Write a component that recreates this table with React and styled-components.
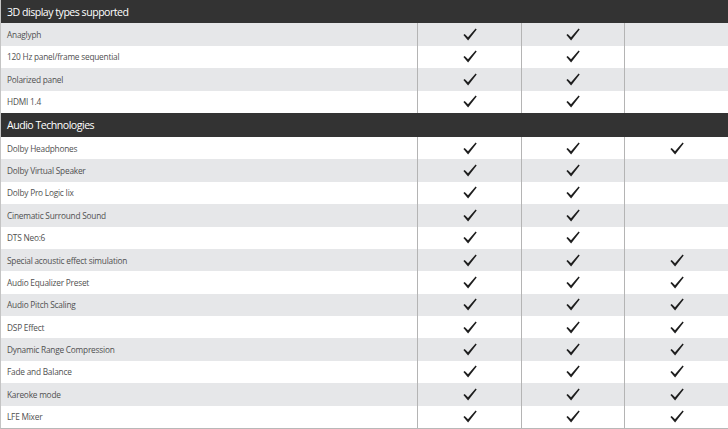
import styled, { createGlobalStyle } from "styled-components";

const GlobalStyle = createGlobalStyle`
  html, body {
    margin: 0;
    padding: 0;
    background: #ffffff;
  }
`;

const sections = [
  {
    title: "3D display types supported",
    headHeight: 23,
    rowHeight: 22.5,
    rows: [
      ["Anaglyph", [1, 1, 0]],
      ["120 Hz panel/frame sequential", [1, 1, 0]],
      ["Polarized panel", [1, 1, 0]],
      ["HDMI 1.4", [1, 1, 0]],
    ],
    shadeOdd: false,
  },
  {
    title: "Audio Technologies",
    headHeight: 24,
    rowHeight: 22.38,
    rows: [
      ["Dolby Headphones", [1, 1, 1]],
      ["Dolby Virtual Speaker", [1, 1, 0]],
      ["Dolby Pro Logic Iix", [1, 1, 0]],
      ["Cinematic Surround Sound", [1, 1, 0]],
      ["DTS Neo:6", [1, 1, 0]],
      ["Special acoustic effect simulation", [1, 1, 1]],
      ["Audio Equalizer Preset", [1, 1, 1]],
      ["Audio Pitch Scaling", [1, 1, 1]],
      ["DSP Effect", [1, 1, 1]],
      ["Dynamic Range Compression", [1, 1, 1]],
      ["Fade and Balance", [1, 1, 1]],
      ["Kareoke mode", [1, 1, 1]],
      ["LFE Mixer", [1, 1, 1]],
    ],
    shadeOdd: true,
  },
];

const Table = styled.div`
  width: 728px;
  height: 429px;
  box-sizing: border-box;
  border-left: 1px solid #c4c4c4;
  border-bottom: 1px solid #b8b8b8;
  font-family: "Open Sans", "Noto Sans", sans-serif;
  overflow: hidden;
`;

const SectionHead = styled.div`
  height: ${(p) => p.$h}px;
  box-sizing: border-box;
  background: #333333;
  color: #ffffff;
  font-size: 10.6px;
  letter-spacing: -0.5px;
  display: flex;
  align-items: center;
  padding-left: 6px;
`;

const Row = styled.div`
  display: grid;
  grid-template-columns: 416px 104px 103px 1fr;
  height: ${(p) => p.$h}px;
  background: ${(p) => (p.$shade ? "#e6e7e9" : "#ffffff")};
`;

const Label = styled.div`
  display: flex;
  align-items: center;
  padding-left: 6px;
  font-size: 8.3px;
  letter-spacing: -0.22px;
  color: #505050;
  white-space: nowrap;
`;

const Cell = styled.div`
  display: flex;
  align-items: center;
  justify-content: center;
  border-left: 1px solid #b4b4b4;
`;

const Check = () => (
  <svg width="14" height="13" viewBox="0 0 14 13">
    <path
      d="M0.4 7.1 L1.7 5.9 L5 9.3 L12.6 0.6 L13.7 1.6 L5.1 12.4 Z"
      fill="#1e1e1e"
    />
  </svg>
);

export default function App() {
  return (
    <>
      <GlobalStyle />
      <Table>
        {sections.map((s) => (
          <div key={s.title}>
            <SectionHead $h={s.headHeight}>{s.title}</SectionHead>
            {s.rows.map(([name, checks], i) => (
              <Row
                key={name}
                $h={s.rowHeight}
                $shade={s.shadeOdd ? i % 2 === 1 : i % 2 === 0}
              >
                <Label>{name}</Label>
                {checks.map((c, j) => (
                  <Cell key={j}>{c ? <Check /> : null}</Cell>
                ))}
              </Row>
            ))}
          </div>
        ))}
      </Table>
    </>
  );
}
